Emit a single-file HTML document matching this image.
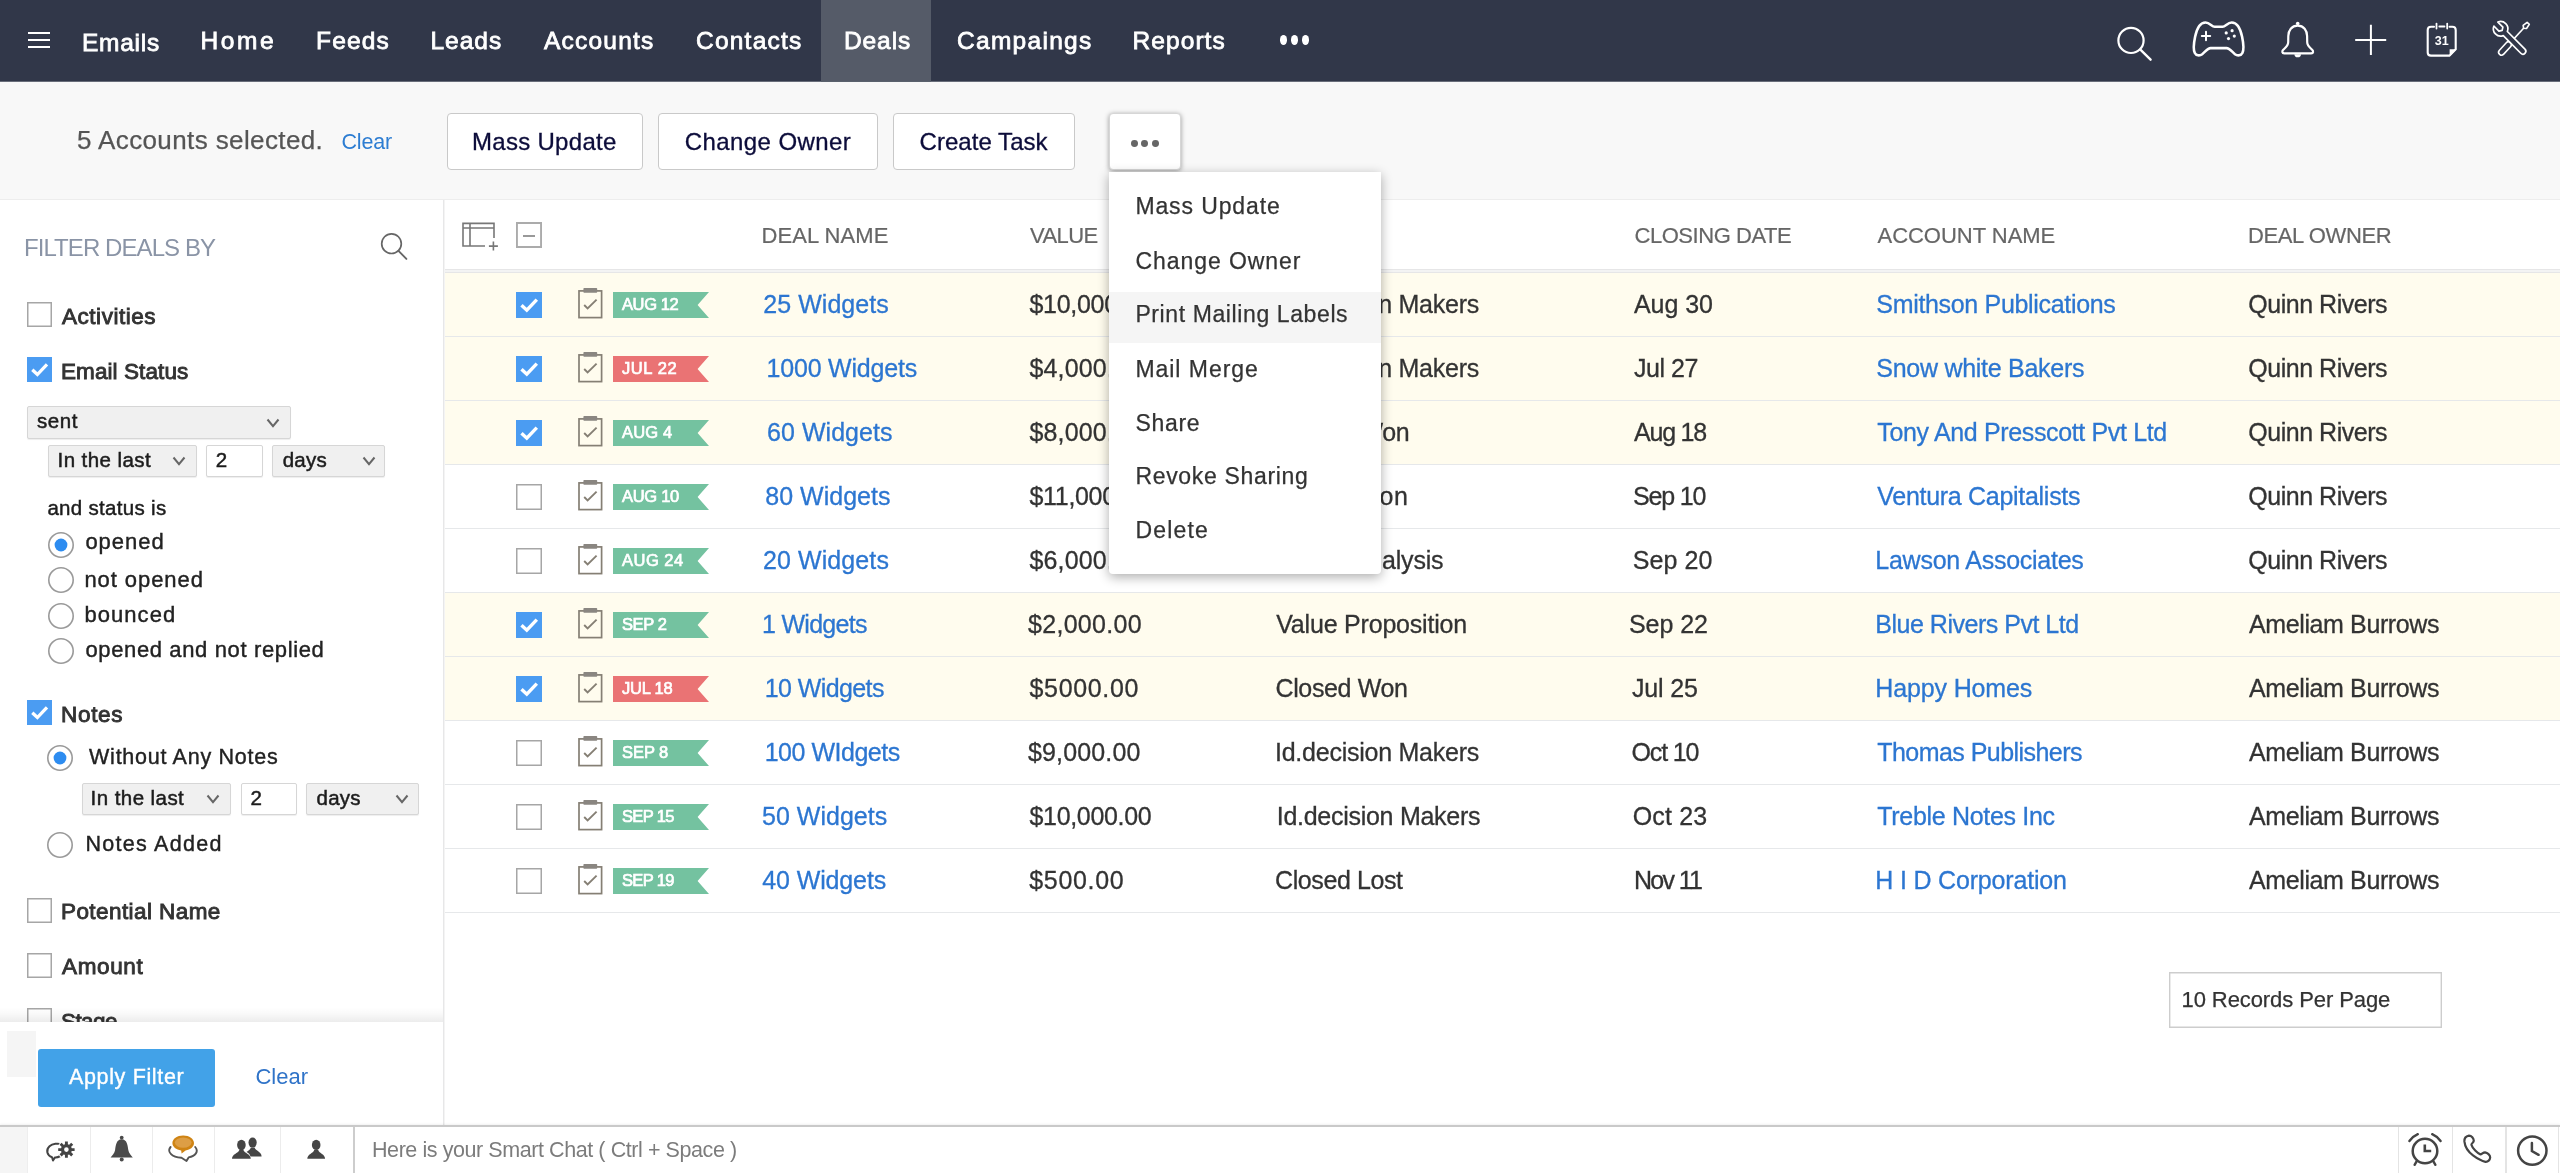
<!DOCTYPE html>
<html lang="en"><head><meta charset="utf-8"><title>Deals</title><style>
html,body{margin:0;padding:0}
body{width:2560px;height:1173px;position:relative;overflow:hidden;background:#fff;font-family:'Liberation Sans', sans-serif;}
i,span,svg{position:absolute;display:block}
span{white-space:nowrap;line-height:1}
section,nav,aside,main,footer,header,menu{display:block;margin:0;padding:0}
.bg{position:absolute}
.btn{background:#fff;border:1px solid #c9c9c9;border-radius:4px}
.z{position:absolute;left:0;top:0;width:0;height:0;will-change:transform}
</style></head>
<body>
<main class="z" style="z-index:1">
<i style="left:444px;top:200px;width:2116px;height:926px;background:#fff"></i>
<svg style="left:458px;top:218px" width="44" height="38" viewBox="458 218 44 38"><path d="M494 238 V223.4 H463 V246 H485 M463 228 H494 M470 223.4 V246 M493.4 241.6 V250.6 M488.9 246.1 H497.9" fill="none" stroke="#777" stroke-width="1.6"/></svg>
<i style="left:515.6px;top:222.3px;width:26.3px;height:26.2px;background:#fff;box-shadow:inset 0 0 0 1.9px #ababab"></i><i style="left:522.6px;top:234.5px;width:12.2px;height:2.2px;background:#999"></i>
<span style="font-size:22px;color:#666;top:225px;letter-spacing:0.066px;left:761.50px;-webkit-text-stroke:0.2px #666;">DEAL NAME</span>
<span style="font-size:22px;color:#666;top:225px;letter-spacing:-0.584px;left:1030.00px;-webkit-text-stroke:0.2px #666;">VALUE</span>
<span style="font-size:22px;color:#666;top:225px;letter-spacing:-0.566px;left:1276.00px;-webkit-text-stroke:0.2px #666;">STAGE</span>
<span style="font-size:22px;color:#666;top:225px;letter-spacing:-0.455px;left:1634.50px;-webkit-text-stroke:0.2px #666;">CLOSING DATE</span>
<span style="font-size:22px;color:#666;top:225px;letter-spacing:-0.025px;left:1877.50px;-webkit-text-stroke:0.2px #666;">ACCOUNT NAME</span>
<span style="font-size:22px;color:#666;top:225px;letter-spacing:-0.391px;left:2248.00px;-webkit-text-stroke:0.2px #666;">DEAL OWNER</span>
<i style="left:444px;top:269px;width:2116px;height:2px;background:#f3f3f3;border-top:1px solid #e6e6e7;border-bottom:1px solid #e6e6e7"></i>
<i style="left:444px;top:273px;width:2116px;height:63px;background:#fffcee;border-bottom:1px solid #e6e8ea"></i>
<i style="left:516px;top:292px;width:26px;height:26px;background:#4b9cf2"></i><svg style="left:516px;top:292px" width="26" height="26" viewBox="0 0 26 26"><path d="M5.5 13.2 L10.8 18.2 L20.8 7.6" fill="none" stroke="#fff" stroke-width="3.4"/></svg>
<svg style="left:576px;top:288px" width="30" height="32" viewBox="576 0 30 32"><rect x="579" y="2.9" width="22.6" height="26.7" fill="none" stroke="#857f74" stroke-width="1.7"/><rect x="583.4" y="0" width="13.8" height="4.8" rx="0.8" fill="#8a8681"/><path d="M584.2 17 L587.6 20.4 L596.6 11.6" fill="none" stroke="#857f74" stroke-width="1.9"/></svg>
<svg style="left:613px;top:292px" width="96" height="26" viewBox="0 0 96 26"><path d="M0 0 H96 L84.6 13 L96 26 H0 Z" fill="#74c2a0"/></svg>
<span style="font-size:16.5px;color:#fff;top:296px;letter-spacing:-0.383px;left:622.00px;-webkit-text-stroke:0.7px #fff;">AUG 12</span>
<span style="font-size:25px;color:#2c76d1;top:292px;letter-spacing:0.049px;left:763.25px;-webkit-text-stroke:0.3px #2c76d1;">25 Widgets</span>
<span style="font-size:25px;color:#333;top:292px;letter-spacing:-0.302px;left:1029.50px;-webkit-text-stroke:0.3px #333;">$10,000.00</span>
<span style="font-size:25px;color:#333;top:292px;letter-spacing:-0.245px;left:1275.00px;-webkit-text-stroke:0.3px #333;">Id.decision Makers</span>
<span style="font-size:25px;color:#333;top:292px;letter-spacing:-0.066px;left:1634.00px;-webkit-text-stroke:0.3px #333;">Aug 30</span>
<span style="font-size:25px;color:#2c76d1;top:292px;letter-spacing:-0.323px;left:1876.30px;-webkit-text-stroke:0.3px #2c76d1;">Smithson Publications</span>
<span style="font-size:25px;color:#333;top:292px;letter-spacing:-0.481px;left:2248.30px;-webkit-text-stroke:0.3px #333;">Quinn Rivers</span>
<i style="left:444px;top:337px;width:2116px;height:63px;background:#fffcee;border-bottom:1px solid #e6e8ea"></i>
<i style="left:516px;top:356px;width:26px;height:26px;background:#4b9cf2"></i><svg style="left:516px;top:356px" width="26" height="26" viewBox="0 0 26 26"><path d="M5.5 13.2 L10.8 18.2 L20.8 7.6" fill="none" stroke="#fff" stroke-width="3.4"/></svg>
<svg style="left:576px;top:352px" width="30" height="32" viewBox="576 0 30 32"><rect x="579" y="2.9" width="22.6" height="26.7" fill="none" stroke="#857f74" stroke-width="1.7"/><rect x="583.4" y="0" width="13.8" height="4.8" rx="0.8" fill="#8a8681"/><path d="M584.2 17 L587.6 20.4 L596.6 11.6" fill="none" stroke="#857f74" stroke-width="1.9"/></svg>
<svg style="left:613px;top:356px" width="96" height="26" viewBox="0 0 96 26"><path d="M0 0 H96 L84.6 13 L96 26 H0 Z" fill="#ea7374"/></svg>
<span style="font-size:16.5px;color:#fff;top:360px;letter-spacing:0.579px;left:622.00px;-webkit-text-stroke:0.7px #fff;">JUL 22</span>
<span style="font-size:25px;color:#2c76d1;top:356px;letter-spacing:-0.193px;left:766.50px;-webkit-text-stroke:0.3px #2c76d1;">1000 Widgets</span>
<span style="font-size:25px;color:#333;top:356px;letter-spacing:0.148px;left:1029.50px;-webkit-text-stroke:0.3px #333;">$4,000.00</span>
<span style="font-size:25px;color:#333;top:356px;letter-spacing:-0.245px;left:1275.00px;-webkit-text-stroke:0.3px #333;">Id.decision Makers</span>
<span style="font-size:25px;color:#333;top:356px;letter-spacing:-0.462px;left:1634.00px;-webkit-text-stroke:0.3px #333;">Jul 27</span>
<span style="font-size:25px;color:#2c76d1;top:356px;letter-spacing:-0.275px;left:1876.30px;-webkit-text-stroke:0.3px #2c76d1;">Snow white Bakers</span>
<span style="font-size:25px;color:#333;top:356px;letter-spacing:-0.481px;left:2248.30px;-webkit-text-stroke:0.3px #333;">Quinn Rivers</span>
<i style="left:444px;top:401px;width:2116px;height:63px;background:#fffcee;border-bottom:1px solid #e6e8ea"></i>
<i style="left:516px;top:420px;width:26px;height:26px;background:#4b9cf2"></i><svg style="left:516px;top:420px" width="26" height="26" viewBox="0 0 26 26"><path d="M5.5 13.2 L10.8 18.2 L20.8 7.6" fill="none" stroke="#fff" stroke-width="3.4"/></svg>
<svg style="left:576px;top:416px" width="30" height="32" viewBox="576 0 30 32"><rect x="579" y="2.9" width="22.6" height="26.7" fill="none" stroke="#857f74" stroke-width="1.7"/><rect x="583.4" y="0" width="13.8" height="4.8" rx="0.8" fill="#8a8681"/><path d="M584.2 17 L587.6 20.4 L596.6 11.6" fill="none" stroke="#857f74" stroke-width="1.9"/></svg>
<svg style="left:613px;top:420px" width="96" height="26" viewBox="0 0 96 26"><path d="M0 0 H96 L84.6 13 L96 26 H0 Z" fill="#74c2a0"/></svg>
<span style="font-size:16.5px;color:#fff;top:424px;letter-spacing:0.165px;left:622.00px;-webkit-text-stroke:0.7px #fff;">AUG 4</span>
<span style="font-size:25px;color:#2c76d1;top:420px;letter-spacing:0.049px;left:767.00px;-webkit-text-stroke:0.3px #2c76d1;">60 Widgets</span>
<span style="font-size:25px;color:#333;top:420px;letter-spacing:0.148px;left:1029.50px;-webkit-text-stroke:0.3px #333;">$8,000.00</span>
<span style="font-size:25px;color:#333;top:420px;letter-spacing:-0.340px;left:1277.00px;-webkit-text-stroke:0.3px #333;">Closed Won</span>
<span style="font-size:25px;color:#333;top:420px;letter-spacing:-1.206px;left:1634.00px;-webkit-text-stroke:0.3px #333;">Aug 18</span>
<span style="font-size:25px;color:#2c76d1;top:420px;letter-spacing:-0.354px;left:1877.30px;-webkit-text-stroke:0.3px #2c76d1;">Tony And Presscott Pvt Ltd</span>
<span style="font-size:25px;color:#333;top:420px;letter-spacing:-0.481px;left:2248.30px;-webkit-text-stroke:0.3px #333;">Quinn Rivers</span>
<i style="left:444px;top:465px;width:2116px;height:63px;background:#fff;border-bottom:1px solid #e6e8ea"></i>
<i style="left:516px;top:484px;width:26px;height:26px;background:#fff;box-shadow:inset 0 0 0 1.5px #a6a6a6"></i>
<svg style="left:576px;top:480px" width="30" height="32" viewBox="576 0 30 32"><rect x="579" y="2.9" width="22.6" height="26.7" fill="none" stroke="#857f74" stroke-width="1.7"/><rect x="583.4" y="0" width="13.8" height="4.8" rx="0.8" fill="#8a8681"/><path d="M584.2 17 L587.6 20.4 L596.6 11.6" fill="none" stroke="#857f74" stroke-width="1.9"/></svg>
<svg style="left:613px;top:484px" width="96" height="26" viewBox="0 0 96 26"><path d="M0 0 H96 L84.6 13 L96 26 H0 Z" fill="#74c2a0"/></svg>
<span style="font-size:16.5px;color:#fff;top:488px;letter-spacing:-0.303px;left:622.00px;-webkit-text-stroke:0.7px #fff;">AUG 10</span>
<span style="font-size:25px;color:#2c76d1;top:484px;letter-spacing:0.021px;left:765.25px;-webkit-text-stroke:0.3px #2c76d1;">80 Widgets</span>
<span style="font-size:25px;color:#333;top:484px;letter-spacing:-0.318px;left:1029.50px;-webkit-text-stroke:0.3px #333;">$11,000.00</span>
<span style="font-size:25px;color:#333;top:484px;letter-spacing:0.643px;left:1275.00px;-webkit-text-stroke:0.3px #333;">Negotiation</span>
<span style="font-size:25px;color:#333;top:484px;letter-spacing:-1.166px;left:1633.00px;-webkit-text-stroke:0.3px #333;">Sep 10</span>
<span style="font-size:25px;color:#2c76d1;top:484px;letter-spacing:-0.292px;left:1877.30px;-webkit-text-stroke:0.3px #2c76d1;">Ventura Capitalists</span>
<span style="font-size:25px;color:#333;top:484px;letter-spacing:-0.481px;left:2248.30px;-webkit-text-stroke:0.3px #333;">Quinn Rivers</span>
<i style="left:444px;top:529px;width:2116px;height:63px;background:#fff;border-bottom:1px solid #e6e8ea"></i>
<i style="left:516px;top:548px;width:26px;height:26px;background:#fff;box-shadow:inset 0 0 0 1.5px #a6a6a6"></i>
<svg style="left:576px;top:544px" width="30" height="32" viewBox="576 0 30 32"><rect x="579" y="2.9" width="22.6" height="26.7" fill="none" stroke="#857f74" stroke-width="1.7"/><rect x="583.4" y="0" width="13.8" height="4.8" rx="0.8" fill="#8a8681"/><path d="M584.2 17 L587.6 20.4 L596.6 11.6" fill="none" stroke="#857f74" stroke-width="1.9"/></svg>
<svg style="left:613px;top:548px" width="96" height="26" viewBox="0 0 96 26"><path d="M0 0 H96 L84.6 13 L96 26 H0 Z" fill="#74c2a0"/></svg>
<span style="font-size:16.5px;color:#fff;top:552px;letter-spacing:0.497px;left:622.00px;-webkit-text-stroke:0.7px #fff;">AUG 24</span>
<span style="font-size:25px;color:#2c76d1;top:548px;letter-spacing:0.093px;left:763.00px;-webkit-text-stroke:0.3px #2c76d1;">20 Widgets</span>
<span style="font-size:25px;color:#333;top:548px;letter-spacing:0.148px;left:1029.50px;-webkit-text-stroke:0.3px #333;">$6,000.00</span>
<span style="font-size:25px;color:#333;top:548px;letter-spacing:-0.177px;left:1275.00px;-webkit-text-stroke:0.3px #333;">Needs Analysis</span>
<span style="font-size:25px;color:#333;top:548px;letter-spacing:0.064px;left:1632.75px;-webkit-text-stroke:0.3px #333;">Sep 20</span>
<span style="font-size:25px;color:#2c76d1;top:548px;letter-spacing:-0.256px;left:1875.30px;-webkit-text-stroke:0.3px #2c76d1;">Lawson Associates</span>
<span style="font-size:25px;color:#333;top:548px;letter-spacing:-0.481px;left:2248.30px;-webkit-text-stroke:0.3px #333;">Quinn Rivers</span>
<i style="left:444px;top:593px;width:2116px;height:63px;background:#fffcee;border-bottom:1px solid #e6e8ea"></i>
<i style="left:516px;top:612px;width:26px;height:26px;background:#4b9cf2"></i><svg style="left:516px;top:612px" width="26" height="26" viewBox="0 0 26 26"><path d="M5.5 13.2 L10.8 18.2 L20.8 7.6" fill="none" stroke="#fff" stroke-width="3.4"/></svg>
<svg style="left:576px;top:608px" width="30" height="32" viewBox="576 0 30 32"><rect x="579" y="2.9" width="22.6" height="26.7" fill="none" stroke="#857f74" stroke-width="1.7"/><rect x="583.4" y="0" width="13.8" height="4.8" rx="0.8" fill="#8a8681"/><path d="M584.2 17 L587.6 20.4 L596.6 11.6" fill="none" stroke="#857f74" stroke-width="1.9"/></svg>
<svg style="left:613px;top:612px" width="96" height="26" viewBox="0 0 96 26"><path d="M0 0 H96 L84.6 13 L96 26 H0 Z" fill="#74c2a0"/></svg>
<span style="font-size:16.5px;color:#fff;top:616px;letter-spacing:-0.400px;left:622.00px;-webkit-text-stroke:0.7px #fff;">SEP 2</span>
<span style="font-size:25px;color:#2c76d1;top:612px;letter-spacing:-0.707px;left:762.00px;-webkit-text-stroke:0.3px #2c76d1;">1 Widgets</span>
<span style="font-size:25px;color:#333;top:612px;letter-spacing:0.304px;left:1028.00px;-webkit-text-stroke:0.3px #333;">$2,000.00</span>
<span style="font-size:25px;color:#333;top:612px;letter-spacing:-0.200px;left:1276.25px;-webkit-text-stroke:0.3px #333;">Value Proposition</span>
<span style="font-size:25px;color:#333;top:612px;letter-spacing:-0.066px;left:1629.00px;-webkit-text-stroke:0.3px #333;">Sep 22</span>
<span style="font-size:25px;color:#2c76d1;top:612px;letter-spacing:-0.485px;left:1875.30px;-webkit-text-stroke:0.3px #2c76d1;">Blue Rivers Pvt Ltd</span>
<span style="font-size:25px;color:#333;top:612px;letter-spacing:-0.384px;left:2249.00px;-webkit-text-stroke:0.3px #333;">Ameliam Burrows</span>
<i style="left:444px;top:657px;width:2116px;height:63px;background:#fffcee;border-bottom:1px solid #e6e8ea"></i>
<i style="left:516px;top:676px;width:26px;height:26px;background:#4b9cf2"></i><svg style="left:516px;top:676px" width="26" height="26" viewBox="0 0 26 26"><path d="M5.5 13.2 L10.8 18.2 L20.8 7.6" fill="none" stroke="#fff" stroke-width="3.4"/></svg>
<svg style="left:576px;top:672px" width="30" height="32" viewBox="576 0 30 32"><rect x="579" y="2.9" width="22.6" height="26.7" fill="none" stroke="#857f74" stroke-width="1.7"/><rect x="583.4" y="0" width="13.8" height="4.8" rx="0.8" fill="#8a8681"/><path d="M584.2 17 L587.6 20.4 L596.6 11.6" fill="none" stroke="#857f74" stroke-width="1.9"/></svg>
<svg style="left:613px;top:676px" width="96" height="26" viewBox="0 0 96 26"><path d="M0 0 H96 L84.6 13 L96 26 H0 Z" fill="#ea7374"/></svg>
<span style="font-size:16.5px;color:#fff;top:680px;letter-spacing:-0.221px;left:622.00px;-webkit-text-stroke:0.7px #fff;">JUL 18</span>
<span style="font-size:25px;color:#2c76d1;top:676px;letter-spacing:-0.585px;left:764.70px;-webkit-text-stroke:0.3px #2c76d1;">10 Widgets</span>
<span style="font-size:25px;color:#333;top:676px;letter-spacing:0.662px;left:1029.50px;-webkit-text-stroke:0.3px #333;">$5000.00</span>
<span style="font-size:25px;color:#333;top:676px;letter-spacing:-0.368px;left:1275.50px;-webkit-text-stroke:0.3px #333;">Closed Won</span>
<span style="font-size:25px;color:#333;top:676px;letter-spacing:-0.162px;left:1632.00px;-webkit-text-stroke:0.3px #333;">Jul 25</span>
<span style="font-size:25px;color:#2c76d1;top:676px;letter-spacing:-0.145px;left:1875.30px;-webkit-text-stroke:0.3px #2c76d1;">Happy Homes</span>
<span style="font-size:25px;color:#333;top:676px;letter-spacing:-0.384px;left:2249.00px;-webkit-text-stroke:0.3px #333;">Ameliam Burrows</span>
<i style="left:444px;top:721px;width:2116px;height:63px;background:#fff;border-bottom:1px solid #e6e8ea"></i>
<i style="left:516px;top:740px;width:26px;height:26px;background:#fff;box-shadow:inset 0 0 0 1.5px #a6a6a6"></i>
<svg style="left:576px;top:736px" width="30" height="32" viewBox="576 0 30 32"><rect x="579" y="2.9" width="22.6" height="26.7" fill="none" stroke="#857f74" stroke-width="1.7"/><rect x="583.4" y="0" width="13.8" height="4.8" rx="0.8" fill="#8a8681"/><path d="M584.2 17 L587.6 20.4 L596.6 11.6" fill="none" stroke="#857f74" stroke-width="1.9"/></svg>
<svg style="left:613px;top:740px" width="96" height="26" viewBox="0 0 96 26"><path d="M0 0 H96 L84.6 13 L96 26 H0 Z" fill="#74c2a0"/></svg>
<span style="font-size:16.5px;color:#fff;top:744px;letter-spacing:-0.050px;left:622.00px;-webkit-text-stroke:0.7px #fff;">SEP 8</span>
<span style="font-size:25px;color:#2c76d1;top:740px;letter-spacing:-0.486px;left:764.70px;-webkit-text-stroke:0.3px #2c76d1;">100 WIdgets</span>
<span style="font-size:25px;color:#333;top:740px;letter-spacing:0.148px;left:1028.00px;-webkit-text-stroke:0.3px #333;">$9,000.00</span>
<span style="font-size:25px;color:#333;top:740px;letter-spacing:-0.245px;left:1275.00px;-webkit-text-stroke:0.3px #333;">Id.decision Makers</span>
<span style="font-size:25px;color:#333;top:740px;letter-spacing:-1.148px;left:1631.50px;-webkit-text-stroke:0.3px #333;">Oct 10</span>
<span style="font-size:25px;color:#2c76d1;top:740px;letter-spacing:-0.549px;left:1877.30px;-webkit-text-stroke:0.3px #2c76d1;">Thomas Publishers</span>
<span style="font-size:25px;color:#333;top:740px;letter-spacing:-0.384px;left:2249.00px;-webkit-text-stroke:0.3px #333;">Ameliam Burrows</span>
<i style="left:444px;top:785px;width:2116px;height:63px;background:#fff;border-bottom:1px solid #e6e8ea"></i>
<i style="left:516px;top:804px;width:26px;height:26px;background:#fff;box-shadow:inset 0 0 0 1.5px #a6a6a6"></i>
<svg style="left:576px;top:800px" width="30" height="32" viewBox="576 0 30 32"><rect x="579" y="2.9" width="22.6" height="26.7" fill="none" stroke="#857f74" stroke-width="1.7"/><rect x="583.4" y="0" width="13.8" height="4.8" rx="0.8" fill="#8a8681"/><path d="M584.2 17 L587.6 20.4 L596.6 11.6" fill="none" stroke="#857f74" stroke-width="1.9"/></svg>
<svg style="left:613px;top:804px" width="96" height="26" viewBox="0 0 96 26"><path d="M0 0 H96 L84.6 13 L96 26 H0 Z" fill="#74c2a0"/></svg>
<span style="font-size:16.5px;color:#fff;top:808px;letter-spacing:-0.635px;left:622.00px;-webkit-text-stroke:0.7px #fff;">SEP 15</span>
<span style="font-size:25px;color:#2c76d1;top:804px;letter-spacing:0.015px;left:762.00px;-webkit-text-stroke:0.3px #2c76d1;">50 Widgets</span>
<span style="font-size:25px;color:#333;top:804px;letter-spacing:-0.330px;left:1029.50px;-webkit-text-stroke:0.3px #333;">$10,000.00</span>
<span style="font-size:25px;color:#333;top:804px;letter-spacing:-0.275px;left:1276.75px;-webkit-text-stroke:0.3px #333;">Id.decision Makers</span>
<span style="font-size:25px;color:#333;top:804px;letter-spacing:0.152px;left:1632.75px;-webkit-text-stroke:0.3px #333;">Oct 23</span>
<span style="font-size:25px;color:#2c76d1;top:804px;letter-spacing:-0.319px;left:1877.30px;-webkit-text-stroke:0.3px #2c76d1;">Treble Notes Inc</span>
<span style="font-size:25px;color:#333;top:804px;letter-spacing:-0.384px;left:2249.00px;-webkit-text-stroke:0.3px #333;">Ameliam Burrows</span>
<i style="left:444px;top:849px;width:2116px;height:63px;background:#fff;border-bottom:1px solid #e6e8ea"></i>
<i style="left:516px;top:868px;width:26px;height:26px;background:#fff;box-shadow:inset 0 0 0 1.5px #a6a6a6"></i>
<svg style="left:576px;top:864px" width="30" height="32" viewBox="576 0 30 32"><rect x="579" y="2.9" width="22.6" height="26.7" fill="none" stroke="#857f74" stroke-width="1.7"/><rect x="583.4" y="0" width="13.8" height="4.8" rx="0.8" fill="#8a8681"/><path d="M584.2 17 L587.6 20.4 L596.6 11.6" fill="none" stroke="#857f74" stroke-width="1.9"/></svg>
<svg style="left:613px;top:868px" width="96" height="26" viewBox="0 0 96 26"><path d="M0 0 H96 L84.6 13 L96 26 H0 Z" fill="#74c2a0"/></svg>
<span style="font-size:16.5px;color:#fff;top:872px;letter-spacing:-0.635px;left:622.00px;-webkit-text-stroke:0.7px #fff;">SEP 19</span>
<span style="font-size:25px;color:#2c76d1;top:868px;letter-spacing:-0.129px;left:762.30px;-webkit-text-stroke:0.3px #2c76d1;">40 Widgets</span>
<span style="font-size:25px;color:#333;top:868px;letter-spacing:0.656px;left:1029.30px;-webkit-text-stroke:0.3px #333;">$500.00</span>
<span style="font-size:25px;color:#333;top:868px;letter-spacing:-0.407px;left:1275.00px;-webkit-text-stroke:0.3px #333;">Closed Lost</span>
<span style="font-size:25px;color:#333;top:868px;letter-spacing:-1.690px;left:1634.00px;-webkit-text-stroke:0.3px #333;">Nov 11</span>
<span style="font-size:25px;color:#2c76d1;top:868px;letter-spacing:-0.182px;left:1875.30px;-webkit-text-stroke:0.3px #2c76d1;">H I D Corporation</span>
<span style="font-size:25px;color:#333;top:868px;letter-spacing:-0.384px;left:2249.00px;-webkit-text-stroke:0.3px #333;">Ameliam Burrows</span>
<i style="left:2169px;top:972px;width:273px;height:56px;background:#fff;box-shadow:inset 0 0 0 1.4px #cdcdcd"></i>
<span style="font-size:22px;color:#333;top:989px;letter-spacing:-0.084px;left:2181.50px;-webkit-text-stroke:0.25px #333;">10 Records Per Page</span>
</main>
<aside class="z" style="z-index:2">
<i style="left:0;top:200px;width:443px;height:926px;background:#fff;border-right:1px solid #e7e7e8;box-shadow:1px 0 0 #f4f4f4"></i>
<span style="font-size:24px;color:#8a94a6;top:236px;letter-spacing:-0.924px;left:24.00px;">FILTER DEALS BY</span>
<svg style="left:378px;top:231px" width="32" height="32" viewBox="378 231 32 32"><circle cx="391.5" cy="243.7" r="9.8" fill="none" stroke="#666" stroke-width="1.7"/><path d="M398.5 250.8 L406.4 258.9" stroke="#666" stroke-width="1.9" stroke-linecap="round"/></svg>
<i style="left:27px;top:302px;width:25px;height:25px;background:#fff;box-shadow:inset 0 0 0 1.5px #a6a6a6"></i>
<span style="font-size:22.5px;color:#333;top:306px;letter-spacing:0.531px;left:62.00px;-webkit-text-stroke:0.9px #333;">Activities</span>
<i style="left:27px;top:357px;width:25px;height:25px;background:#4b9cf2"></i><svg style="left:27px;top:357px" width="25" height="25" viewBox="0 0 26 26"><path d="M5.5 13.2 L10.8 18.2 L20.8 7.6" fill="none" stroke="#fff" stroke-width="3.4"/></svg>
<span style="font-size:22.5px;color:#333;top:361px;letter-spacing:0.086px;left:61.00px;-webkit-text-stroke:0.9px #333;">Email Status</span>
<i style="left:27px;top:700px;width:25px;height:25px;background:#4b9cf2"></i><svg style="left:27px;top:700px" width="25" height="25" viewBox="0 0 26 26"><path d="M5.5 13.2 L10.8 18.2 L20.8 7.6" fill="none" stroke="#fff" stroke-width="3.4"/></svg>
<span style="font-size:22.5px;color:#333;top:704px;letter-spacing:0.693px;left:61.00px;-webkit-text-stroke:0.9px #333;">Notes</span>
<i style="left:27px;top:898px;width:25px;height:25px;background:#fff;box-shadow:inset 0 0 0 1.5px #a6a6a6"></i>
<span style="font-size:22.5px;color:#333;top:901px;letter-spacing:0.422px;left:61.00px;-webkit-text-stroke:0.9px #333;">Potential Name</span>
<i style="left:27px;top:953px;width:25px;height:25px;background:#fff;box-shadow:inset 0 0 0 1.5px #a6a6a6"></i>
<span style="font-size:22.5px;color:#333;top:956px;letter-spacing:0.642px;left:62.00px;-webkit-text-stroke:0.9px #333;">Amount</span>
<i style="left:27px;top:1008px;width:25px;height:25px;background:#fff;box-shadow:inset 0 0 0 1.5px #a6a6a6"></i>
<span style="font-size:22.5px;color:#333;top:1011px;letter-spacing:-0.571px;left:61.00px;-webkit-text-stroke:0.9px #333;">Stage</span>
<i style="left:27px;top:406px;width:262.3px;height:30.5px;background:#f0f0f0;border:1px solid #d6d6d6;border-radius:2px;box-shadow:0 1px 1px rgba(0,0,0,.07)"></i>
<span style="font-size:20.5px;color:#1c1c1c;top:411px;letter-spacing:0.583px;left:37.00px;-webkit-text-stroke:0.5px #1c1c1c;">sent</span>
<svg style="left:266.3px;top:416.55px" width="14" height="12" viewBox="-1 -6 14 12"><path d="M0.5 -3.5 L6 3.2 L11.5 -3.5" fill="none" stroke="#666" stroke-width="2"/></svg>
<i style="left:48.2px;top:445px;width:146.8px;height:30.30000000000001px;background:#f0f0f0;border:1px solid #d6d6d6;border-radius:2px;box-shadow:0 1px 1px rgba(0,0,0,.07)"></i>
<span style="font-size:20.5px;color:#1c1c1c;top:450px;letter-spacing:0.431px;left:57.50px;-webkit-text-stroke:0.5px #1c1c1c;">In the last</span>
<svg style="left:172px;top:455.45px" width="14" height="12" viewBox="-1 -6 14 12"><path d="M0.5 -3.5 L6 3.2 L11.5 -3.5" fill="none" stroke="#666" stroke-width="2"/></svg>
<i style="left:206.3px;top:445px;width:54.30000000000001px;height:30.30000000000001px;background:#fff;border:1px solid #d6d6d6;border-radius:2px;box-shadow:0 1px 1px rgba(0,0,0,.07)"></i>
<span style="font-size:20.5px;color:#1c1c1c;top:450px;left:215.70px;-webkit-text-stroke:0.5px #1c1c1c;">2</span>
<i style="left:272.4px;top:445px;width:111.10000000000002px;height:30.30000000000001px;background:#f0f0f0;border:1px solid #d6d6d6;border-radius:2px;box-shadow:0 1px 1px rgba(0,0,0,.07)"></i>
<span style="font-size:20.5px;color:#1c1c1c;top:450px;letter-spacing:0.216px;left:282.70px;-webkit-text-stroke:0.5px #1c1c1c;">days</span>
<svg style="left:362px;top:455.45px" width="14" height="12" viewBox="-1 -6 14 12"><path d="M0.5 -3.5 L6 3.2 L11.5 -3.5" fill="none" stroke="#666" stroke-width="2"/></svg>
<span style="font-size:20.5px;color:#1c1c1c;top:498px;letter-spacing:0.313px;left:47.40px;-webkit-text-stroke:0.45px #1c1c1c;">and status is</span>
<svg style="left:46px;top:529.7px" width="30" height="30" viewBox="46 529.7 30 30"><circle cx="61" cy="544.7" r="12.2" fill="#fff" stroke="#9a9a9a" stroke-width="1.6"/><circle cx="61" cy="544.7" r="6.4" fill="#2d8cf0"/></svg>
<span style="font-size:22px;color:#222;top:531px;letter-spacing:0.965px;left:85.40px;-webkit-text-stroke:0.4px #222;">opened</span>
<svg style="left:46px;top:565px" width="30" height="30" viewBox="46 565 30 30"><circle cx="61" cy="580" r="12.2" fill="#fff" stroke="#9a9a9a" stroke-width="1.6"/></svg>
<span style="font-size:22px;color:#222;top:569px;letter-spacing:0.936px;left:84.40px;-webkit-text-stroke:0.4px #222;">not opened</span>
<svg style="left:46px;top:600.5px" width="30" height="30" viewBox="46 600.5 30 30"><circle cx="61" cy="615.5" r="12.2" fill="#fff" stroke="#9a9a9a" stroke-width="1.6"/></svg>
<span style="font-size:22px;color:#222;top:604px;letter-spacing:1.071px;left:84.40px;-webkit-text-stroke:0.4px #222;">bounced</span>
<svg style="left:46px;top:636.3px" width="30" height="30" viewBox="46 636.3 30 30"><circle cx="61" cy="651.3" r="12.2" fill="#fff" stroke="#9a9a9a" stroke-width="1.6"/></svg>
<span style="font-size:22px;color:#222;top:639px;letter-spacing:0.636px;left:85.40px;-webkit-text-stroke:0.4px #222;">opened and not replied</span>
<svg style="left:44.5px;top:742.6px" width="30" height="30" viewBox="44.5 742.6 30 30"><circle cx="59.5" cy="757.6" r="12.2" fill="#fff" stroke="#9a9a9a" stroke-width="1.6"/><circle cx="59.5" cy="757.6" r="6.4" fill="#2d8cf0"/></svg>
<span style="font-size:21.5px;color:#222;top:747px;letter-spacing:0.731px;left:89.10px;-webkit-text-stroke:0.4px #222;">Without Any Notes</span>
<i style="left:82.2px;top:782.6px;width:146.5px;height:30.399999999999977px;background:#f0f0f0;border:1px solid #d6d6d6;border-radius:2px;box-shadow:0 1px 1px rgba(0,0,0,.07)"></i>
<span style="font-size:20.5px;color:#1c1c1c;top:788px;letter-spacing:0.431px;left:90.60px;-webkit-text-stroke:0.5px #1c1c1c;">In the last</span>
<svg style="left:205.7px;top:793.0999999999999px" width="14" height="12" viewBox="-1 -6 14 12"><path d="M0.5 -3.5 L6 3.2 L11.5 -3.5" fill="none" stroke="#666" stroke-width="2"/></svg>
<i style="left:240.5px;top:782.6px;width:54.10000000000002px;height:30.399999999999977px;background:#fff;border:1px solid #d6d6d6;border-radius:2px;box-shadow:0 1px 1px rgba(0,0,0,.07)"></i>
<span style="font-size:20.5px;color:#1c1c1c;top:788px;left:250.60px;-webkit-text-stroke:0.5px #1c1c1c;">2</span>
<i style="left:306.1px;top:782.6px;width:111.09999999999997px;height:30.399999999999977px;background:#f0f0f0;border:1px solid #d6d6d6;border-radius:2px;box-shadow:0 1px 1px rgba(0,0,0,.07)"></i>
<span style="font-size:20.5px;color:#1c1c1c;top:788px;letter-spacing:0.183px;left:316.60px;-webkit-text-stroke:0.5px #1c1c1c;">days</span>
<svg style="left:395.4px;top:793.0999999999999px" width="14" height="12" viewBox="-1 -6 14 12"><path d="M0.5 -3.5 L6 3.2 L11.5 -3.5" fill="none" stroke="#666" stroke-width="2"/></svg>
<svg style="left:44.5px;top:830px" width="30" height="30" viewBox="44.5 830 30 30"><circle cx="59.5" cy="845" r="12.2" fill="#fff" stroke="#9a9a9a" stroke-width="1.6"/></svg>
<span style="font-size:21.5px;color:#222;top:834px;letter-spacing:1.285px;left:85.40px;-webkit-text-stroke:0.4px #222;">Notes Added</span>
<i style="left:0;top:1007px;width:443px;height:15px;background:linear-gradient(rgba(0,0,0,0),rgba(0,0,0,.018) 40%,rgba(0,0,0,.075))"></i><i style="left:0;top:1022px;width:443px;height:104px;background:#fff"></i>
<i style="left:7px;top:1031px;width:28.6px;height:45.6px;background:#f5f5f5"></i>
<i style="left:37.5px;top:1049px;width:177.7px;height:57.6px;background:#42a2e8;border-radius:3px"></i>
<span style="font-size:21.5px;color:#fff;top:1067px;letter-spacing:0.648px;left:69.00px;-webkit-text-stroke:0.4px #fff;">Apply Filter</span>
<span style="font-size:22px;color:#2f73c8;top:1066px;letter-spacing:0.038px;left:255.40px;">Clear</span>
</aside>
<header class="z" style="z-index:3">
<i style="left:0;top:81px;width:2560px;height:118px;background:#f8f8f8;border-bottom:1px solid #ededed"></i>
<span style="font-size:26px;color:#555;top:127px;letter-spacing:0.385px;left:77.00px;-webkit-text-stroke:0.25px #555;">5 Accounts selected.</span>
<span style="font-size:21.5px;color:#2d7dd2;top:132px;letter-spacing:-0.179px;left:341.50px;">Clear</span>
<i class="btn" style="left:447px;top:113px;width:194px;height:55px"></i>
<span style="font-size:24px;color:#0c0c3a;top:130px;letter-spacing:0.295px;left:472.00px;-webkit-text-stroke:0.3px #0c0c3a;">Mass Update</span>
<i class="btn" style="left:658px;top:113px;width:217.5px;height:55px"></i>
<span style="font-size:24px;color:#0c0c3a;top:130px;letter-spacing:0.415px;left:684.75px;-webkit-text-stroke:0.3px #0c0c3a;">Change Owner</span>
<i class="btn" style="left:893px;top:113px;width:180px;height:55px"></i>
<span style="font-size:24px;color:#0c0c3a;top:130px;letter-spacing:0.045px;left:919.50px;-webkit-text-stroke:0.3px #0c0c3a;">Create Task</span>
<i class="btn" style="left:1108.6px;top:113px;width:70.6px;height:55px;box-shadow:0 1px 5px rgba(0,0,0,.38);border-color:#d6d6d6"></i>
<i style="left:1130.6499999999999px;top:140.4px;width:6.9px;height:6.9px;border-radius:50%;background:#666"></i>
<i style="left:1141.45px;top:140.4px;width:6.9px;height:6.9px;border-radius:50%;background:#666"></i>
<i style="left:1152.1499999999999px;top:140.4px;width:6.9px;height:6.9px;border-radius:50%;background:#666"></i>
</header>
<nav class="z" style="z-index:4">
<i style="left:0;top:0;width:2560px;height:81px;background:#313749;box-shadow:0 1px 0 rgba(49,55,73,.72)"></i>
<i style="left:28px;top:32px;width:22px;height:2px;background:#fff"></i>
<i style="left:28px;top:39px;width:22px;height:2px;background:#fff"></i>
<i style="left:28px;top:46px;width:22px;height:2px;background:#fff"></i>
<i style="left:821px;top:0;width:110px;height:81px;background:#555b68;box-shadow:0 1px 0 rgba(85,91,104,.72)"></i>
<span style="font-size:24.5px;color:#fff;top:31px;letter-spacing:0.748px;left:82.00px;-webkit-text-stroke:0.8px #fff;">Emails</span>
<span style="font-size:24.5px;color:#fff;top:29px;letter-spacing:2.591px;left:200.50px;-webkit-text-stroke:0.8px #fff;">Home</span>
<span style="font-size:24.5px;color:#fff;top:29px;letter-spacing:1.164px;left:316.00px;-webkit-text-stroke:0.8px #fff;">Feeds</span>
<span style="font-size:24.5px;color:#fff;top:29px;letter-spacing:0.999px;left:430.50px;-webkit-text-stroke:0.8px #fff;">Leads</span>
<span style="font-size:24.5px;color:#fff;top:29px;letter-spacing:1.211px;left:544.00px;-webkit-text-stroke:0.8px #fff;">Accounts</span>
<span style="font-size:24.5px;color:#fff;top:29px;letter-spacing:1.224px;left:696.00px;-webkit-text-stroke:0.8px #fff;">Contacts</span>
<span style="font-size:24.5px;color:#fff;top:29px;letter-spacing:0.903px;left:844.00px;-webkit-text-stroke:0.8px #fff;">Deals</span>
<span style="font-size:24.5px;color:#fff;top:29px;letter-spacing:1.291px;left:957.00px;-webkit-text-stroke:0.8px #fff;">Campaings</span>
<span style="font-size:24.5px;color:#fff;top:29px;letter-spacing:1.077px;left:1132.50px;-webkit-text-stroke:0.8px #fff;">Reports</span>
<i style="left:1279.9px;top:35.3px;width:7.2px;height:9.6px;border-radius:50%;background:#fff"></i>
<i style="left:1290.7px;top:35.3px;width:7.2px;height:9.6px;border-radius:50%;background:#fff"></i>
<i style="left:1301.5px;top:35.3px;width:7.2px;height:9.6px;border-radius:50%;background:#fff"></i>
<svg style="left:2100px;top:10px" width="460" height="62" viewBox="2100 10 460 62" fill="none" stroke="#fff" stroke-linecap="round" stroke-linejoin="round">
<circle cx="2131" cy="40.4" r="12.6" stroke-width="2.2"/><path d="M2140.4 49.7 L2150.6 59.7" stroke-width="2.4"/>
<path stroke-width="2.6" d="M2205.5 22.5 C2209.7 22.5 2211.8 26.7 2214.6 26.7 L2222.6 26.7 C2225.4 26.7 2227.5 22.5 2231.7 22.5 C2237.7 22.5 2240.6 29.6 2242.1 36.8 C2243.6 44 2243.9 50 2242.4 53 C2241.1 55.6 2237.6 56.1 2235 54.2 C2232 51.9 2229.6 48.1 2226.6 48.1 L2210.6 48.1 C2207.6 48.1 2205.2 51.9 2202.2 54.2 C2199.6 56.1 2196.1 55.6 2194.8 53 C2193.3 50 2193.6 44 2195.1 36.8 C2196.6 29.6 2199.5 22.5 2205.5 22.5 Z"/>
<path stroke-width="2" d="M2201.8 36 H2210.2 M2206 31.8 V40.2"/>
<g fill="#fff" stroke="none"><circle cx="2232.1" cy="30.7" r="1.6"/><circle cx="2226.2" cy="32.9" r="1.6"/><circle cx="2234.3" cy="36.1" r="1.6"/><circle cx="2228.5" cy="38.6" r="1.6"/></g>
<circle cx="2297.7" cy="23.5" r="1.8" fill="#fff" stroke="none"/>
<path stroke-width="2.2" d="M2297.7 25.6 C2291.6 25.6 2288.4 30.4 2288.3 36 L2288.2 42.2 C2288.2 45.6 2285.6 47.6 2283.6 49.4 C2281.6 51.1 2282 53.3 2284.2 53.3 L2311.2 53.3 C2313.4 53.3 2313.8 51.1 2311.8 49.4 C2309.8 47.6 2307.2 45.6 2307.2 42.2 L2307.1 36 C2307 30.4 2303.8 25.6 2297.7 25.6 Z"/>
<path d="M2294.4 54.2 A3.3 3.1 0 0 0 2301 54.2 Z" fill="#fff" stroke="none"/>
<path stroke-width="2" stroke-linecap="butt" d="M2355.2 39.9 H2386.2 M2370.9 24.8 V54.9"/>
<path stroke-width="2.1" d="M2434 26.8 H2431 Q2427.7 26.8 2427.7 30 V52.4 Q2427.7 55.6 2431 55.6 H2449.6 L2455.7 49.2 V30 Q2455.7 26.8 2452.4 26.8 H2449.6"/>
<path stroke-width="1.8" d="M2439.3 26.5 H2444.5 M2436.5 23.6 V28.6 M2447.2 23.6 V28.6"/>
<path d="M2449.6 49.2 H2456.4 L2449.6 56.4 Z" fill="#fff" stroke="none"/>
<text x="2441.7" y="44.7" text-anchor="middle" font-family="'Liberation Sans',sans-serif" font-size="12.5" font-weight="bold" fill="#fff" stroke="none">31</text>
<g transform="translate(2527 24.6) rotate(132.7)" stroke-width="1.6"><path d="M-1.8 -1.5 L3.2 -2.3 L5 0 L3.2 2.3 L-1.8 1.5 Z"/><path d="M5 0 H24.5"/><path d="M27.4 -2.9 L37.5 -2.9 A2.9 2.9 0 0 1 37.5 2.9 L27.4 2.9 A2.9 2.9 0 0 1 27.4 -2.9 Z"/></g>
<g transform="translate(2500.6 28.8) rotate(45.2)" stroke-width="1.7"><path fill="#313749" d="M-6.7 -2.8 A7.3 7.3 0 0 1 6.7 -2.9 L31.6 -2.9 A2.9 2.9 0 0 1 31.6 2.9 L6.7 2.9 A7.3 7.3 0 0 1 -6.7 2.8 L0.4 2.8 L2.2 0 L0.4 -2.8 Z"/></g>
</svg>
</nav>
<section class="z" style="z-index:5">
<i style="left:1109px;top:172px;width:272px;height:401.5px;background:#fff;border-radius:0 0 4px 4px;box-shadow:0 3px 12px rgba(0,0,0,.33)"></i>
<i style="left:1109px;top:292px;width:272px;height:50.5px;background:#f5f5f5"></i>
<span style="font-size:23px;color:#333;top:195px;letter-spacing:0.888px;left:1135.40px;-webkit-text-stroke:0.25px #333;">Mass Update</span>
<span style="font-size:23px;color:#333;top:250px;letter-spacing:0.942px;left:1135.40px;-webkit-text-stroke:0.25px #333;">Change Owner</span>
<span style="font-size:23px;color:#333;top:303px;letter-spacing:0.605px;left:1135.40px;-webkit-text-stroke:0.25px #333;">Print Mailing Labels</span>
<span style="font-size:23px;color:#333;top:358px;letter-spacing:0.971px;left:1135.40px;-webkit-text-stroke:0.25px #333;">Mail Merge</span>
<span style="font-size:23px;color:#333;top:412px;letter-spacing:0.692px;left:1135.40px;-webkit-text-stroke:0.25px #333;">Share</span>
<span style="font-size:23px;color:#333;top:465px;letter-spacing:0.680px;left:1135.40px;-webkit-text-stroke:0.25px #333;">Revoke Sharing</span>
<span style="font-size:23px;color:#333;top:519px;letter-spacing:1.181px;left:1135.40px;-webkit-text-stroke:0.25px #333;">Delete</span>
</section>
<footer class="z" style="z-index:6">
<i style="left:0;top:1125px;width:2560px;height:48px;background:#fff;border-top:2px solid #c9c9c9;box-shadow:0 -1px 2px rgba(0,0,0,.06)"></i>
<i style="left:0;top:1127px;width:27.5px;height:46px;background:#f5f5f5"></i>
<i style="left:27px;top:1127px;width:1px;height:46px;background:#eeeeee"></i>
<i style="left:89.5px;top:1127px;width:1px;height:46px;background:#ececec"></i>
<i style="left:151.5px;top:1127px;width:1px;height:46px;background:#ececec"></i>
<i style="left:213.5px;top:1127px;width:1px;height:46px;background:#ececec"></i>
<i style="left:279.5px;top:1127px;width:1px;height:46px;background:#ececec"></i>
<i style="left:353.4px;top:1127px;width:1.6px;height:46px;background:#cdcdcd"></i>
<i style="left:2397.8px;top:1127px;width:1.7px;height:46px;background:#e4e4e4"></i>
<i style="left:2451.6px;top:1127px;width:1.7px;height:46px;background:#e4e4e4"></i>
<i style="left:2505.2px;top:1127px;width:1.7px;height:46px;background:#e4e4e4"></i>
<i style="left:2557.8px;top:1127px;width:1.7px;height:46px;background:#e4e4e4"></i>
<span style="font-size:21.5px;color:#7c7c7c;top:1140px;letter-spacing:-0.425px;left:372.00px;">Here is your Smart Chat ( Ctrl + Space )</span>
<svg style="left:40px;top:1130px" width="300" height="40" viewBox="40 1130 300 40" fill="none" stroke="#444" stroke-linecap="round" stroke-linejoin="round">
<path stroke-width="2" d="M52 1157.2 C47 1155.5 45.5 1150 49.5 1146.3 C52.5 1143.6 58 1143 62 1144.6 M60.5 1156 C58.5 1157 56 1157.5 55 1157.4 L53 1160.4 L52 1157.2"/>
<circle cx="66.4" cy="1149.6" r="9.4" fill="#fff" stroke="none"/>
<circle cx="66.4" cy="1149.6" r="3.9" stroke-width="3.2"/>
<path stroke-width="2.9" stroke-linecap="butt" d="M66.4 1141.4 V1145 M66.4 1154.2 V1157.8 M58.2 1149.6 H61.8 M71 1149.6 H74.6 M60.6 1143.8 L63.1 1146.3 M69.7 1152.9 L72.2 1155.4 M60.6 1155.4 L63.1 1152.9 M69.7 1146.3 L72.2 1143.8"/>
<g fill="#4a4a4a" stroke="none"><circle cx="121.7" cy="1137.6" r="1.9"/><path d="M121.7 1139.2 C116.2 1139.2 115.6 1146 115.1 1150 C114.7 1153.5 112 1155.5 110.6 1157.4 L132.8 1157.4 C131.4 1155.5 128.7 1153.5 128.3 1150 C127.8 1146 127.2 1139.2 121.7 1139.2 Z"/><circle cx="121.7" cy="1159.5" r="2"/></g>
<g stroke="none"><path fill="#cf8414" d="M183.2 1135.4 C189.4 1135.4 194 1138.8 194 1143 C194 1146.8 190.4 1149.8 185.6 1150.4 L181.6 1153.4 L181.2 1150.4 C176.2 1149.8 172.4 1146.8 172.4 1143 C172.4 1138.8 177 1135.4 183.2 1135.4 Z"/><ellipse cx="183.2" cy="1142.6" rx="8.4" ry="5.2" fill="#dd9e45"/></g>
<path stroke="#555" stroke-width="1.9" d="M170.6 1147 C166.6 1151.5 171.5 1157 181.5 1157.8 L186.5 1161 L188.6 1157.4 C195.5 1156 199 1151.5 195.2 1147"/>
<g fill="#454545" stroke="none">
<ellipse cx="252.6" cy="1142.6" rx="4.1" ry="5"/><path d="M246.5 1152 C248.5 1151 250.3 1149.6 250.8 1147.6 L254.6 1147.6 C255.6 1151 261.6 1151.8 261.6 1156.4 L250.5 1156.4 C250 1154.5 248.5 1153 246.5 1152 Z"/>
<ellipse cx="241.4" cy="1145" rx="4.3" ry="5.2"/><path d="M232 1158.8 C232 1154 238 1153.6 239.4 1150 L243.4 1150 C244.8 1153.6 250.8 1154 250.8 1158.8 Z"/>
<ellipse cx="316.2" cy="1144.9" rx="4.3" ry="5.2"/><path d="M307.3 1158.8 C307.3 1154 313.2 1153.6 314.2 1150 L318.2 1150 C319.2 1153.6 325.1 1154 325.1 1158.8 Z"/>
</g>
</svg>
<svg style="left:2400px;top:1130px" width="158" height="42" viewBox="2400 1130 158 42" fill="none" stroke="#444" stroke-linecap="round" stroke-linejoin="round">
<circle cx="2425" cy="1151" r="12.3" stroke-width="2.5"/>
<path stroke-width="2.4" d="M2409.4 1141 C2411.6 1138 2414.6 1135.6 2417.8 1134.2 M2432.2 1134.2 C2435.4 1135.6 2438.4 1138 2440.6 1141 M2416.6 1161.4 L2414.6 1164.8 M2433.4 1161.4 L2435.4 1164.8"/>
<path stroke-width="2.6" stroke-linecap="butt" stroke-linejoin="miter" d="M2424.8 1144.5 V1151 H2431.2"/>
<path stroke-width="2.2" d="M2469 1135.6 C2466 1136.2 2464.2 1138.6 2464.4 1141.4 C2465 1147.4 2469 1152.4 2473 1155.4 C2477 1158.4 2481.6 1161 2485.5 1161.8 C2488 1162 2490 1160 2490.2 1157.4 C2490.2 1155 2487.4 1152.8 2485 1152.3 C2483 1152.3 2482 1154.4 2480.4 1154.4 C2477.6 1153.4 2472.4 1148.4 2471.4 1144.8 C2471.2 1143.2 2473.8 1142.8 2473.8 1140.8 C2473.6 1138.4 2471.6 1135.6 2469 1135.6 Z"/>
<circle cx="2532.3" cy="1150.6" r="14.2" stroke-width="2.5"/>
<path stroke-width="2.5" stroke-linejoin="miter" d="M2531.9 1143 V1151 L2538.6 1154.8"/>
</svg>
</footer>
</body></html>
